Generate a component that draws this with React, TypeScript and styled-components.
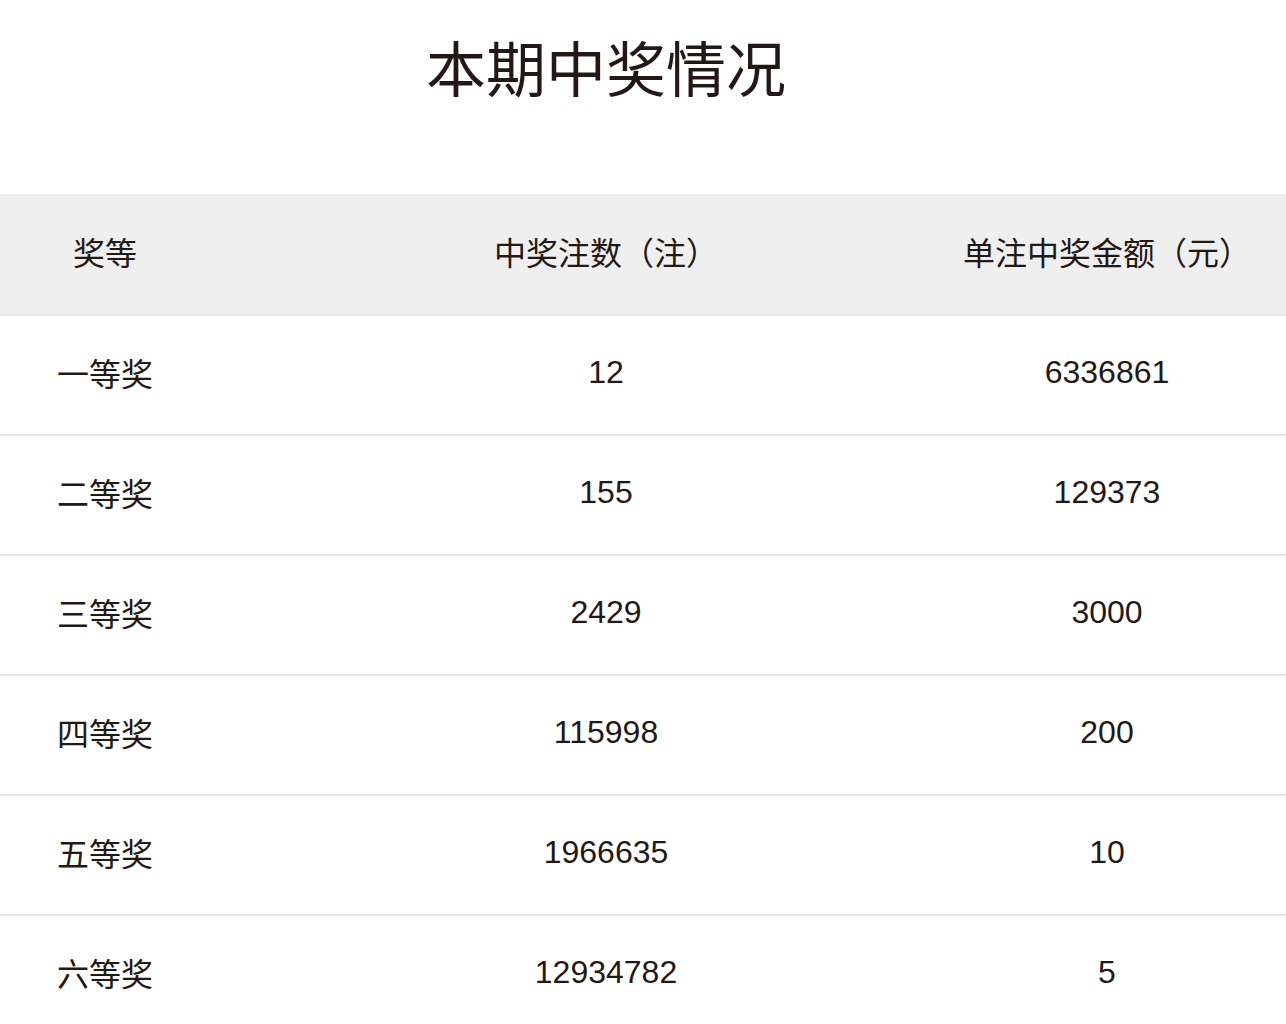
import React from 'react'
import styled, { createGlobalStyle } from 'styled-components'

const GlobalStyle = createGlobalStyle`
  html, body {
    margin: 0;
    padding: 0;
    background: #ffffff;
  }
  body {
    font-family: 'Liberation Sans', 'Noto Sans CJK SC', sans-serif;
    color: #231815;
  }
`

const Page = styled.div`
  width: 1286px;
`

const TitleBar = styled.div`
  width: 1212px;
  height: 194px;
  display: flex;
  justify-content: center;
  padding-top: 36px;
  box-sizing: border-box;
`

const Title = styled.h1`
  margin: 0;
  font-family: 'Noto Sans CJK SC', sans-serif;
  font-size: 60px;
  font-weight: 400;
  line-height: 60px;
`

const Row = styled.div<{ $head?: boolean }>`
  display: grid;
  grid-template-columns: 210px 792px 210px 1fr;
  align-items: center;
  height: ${(p) => (p.$head ? '120px' : '118px')};
  background: ${(p) => (p.$head ? '#efefef' : '#ffffff')};
  border-bottom: 2px solid #e6e6e6;
`

const Cell = styled.div<{ $head?: boolean }>`
  display: flex;
  justify-content: center;
  font-size: 32px;
  line-height: 40px;
  white-space: nowrap;
  padding-bottom: ${(p) => (p.$head ? '7px' : '6px')};
  font-family: ${(p) =>
    p.$head ? "'Noto Sans CJK SC', sans-serif" : "'Liberation Sans', 'Noto Sans CJK SC', sans-serif"};
`

const Label = styled.span`
  font-family: 'Noto Sans CJK SC', sans-serif;
`

type Prize = {
  level: string
  count: string
  amount: string
}

const prizes: Prize[] = [
  { level: '一等奖', count: '12', amount: '6336861' },
  { level: '二等奖', count: '155', amount: '129373' },
  { level: '三等奖', count: '2429', amount: '3000' },
  { level: '四等奖', count: '115998', amount: '200' },
  { level: '五等奖', count: '1966635', amount: '10' },
  { level: '六等奖', count: '12934782', amount: '5' }
]

function App() {
  return (
    <Page>
      <GlobalStyle />
      <TitleBar>
        <Title>本期中奖情况</Title>
      </TitleBar>
      <Row $head>
        <Cell $head>奖等</Cell>
        <Cell $head>中奖注数（注）</Cell>
        <Cell $head>单注中奖金额（元）</Cell>
      </Row>
      {prizes.map((prize) => (
        <Row key={prize.level}>
          <Cell>
            <Label>{prize.level}</Label>
          </Cell>
          <Cell>{prize.count}</Cell>
          <Cell>{prize.amount}</Cell>
        </Row>
      ))}
    </Page>
  )
}

export default App
